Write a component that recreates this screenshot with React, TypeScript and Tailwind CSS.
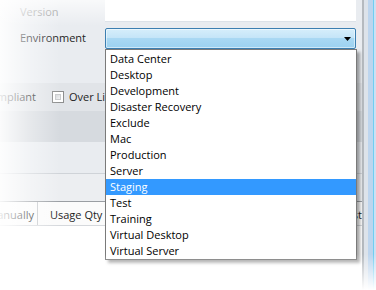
import React from "react";

const items = [
  "Data Center",
  "Desktop",
  "Development",
  "Disaster Recovery",
  "Exclude",
  "Mac",
  "Production",
  "Server",
  "Staging",
  "Test",
  "Training",
  "Virtual Desktop",
  "Virtual Server",
];

export default function App() {
  return (
    <div
      className="relative w-[376px] h-[290px] overflow-hidden bg-white flex text-[11px] text-[#1e1e1e]"
      style={{ fontFamily: '"Open Sans", "Noto Sans", sans-serif' }}
    >
      {/* main panel */}
      <div className="w-[362px] h-full flex flex-col bg-[#e9ecf0]">
        {/* Version row */}
        <div className="h-[22px] flex items-center">
          <div className="w-[105px] pl-[20px] text-[#858585] mt-[2px]">Version</div>
          <div className="flex-1 mr-[6px] h-full bg-white border-b border-[#dde2e8]" />
        </div>
        <div className="h-[6px]" />
        {/* Environment row */}
        <div className="h-[21px] flex items-center">
          <div className="w-[105px] pl-[20px]">Environment</div>
          <div className="flex-1 mr-[6px] h-full rounded-[2px] border border-[#3c7fb1] bg-[linear-gradient(#d6eefb_0%,#c5e5f8_45%,#a9d8f3_50%,#9bd1f0_100%)] flex items-center justify-end pr-[4px] shadow-[inset_0_0_0_1px_rgba(255,255,255,0.5)]">
            <svg width="7" height="4" viewBox="0 0 7 4">
              <path d="M0 0h7L3.5 4z" fill="#000" />
            </svg>
          </div>
        </div>
        <div className="h-[34px]" />
        {/* checkbox band */}
        <div className="h-[28px] bg-[#e1e4e8] flex items-center">
          <div className="w-[38px] overflow-hidden flex justify-end shrink-0">
            <span className="whitespace-nowrap pr-[2px]">Compliant</span>
          </div>
          <div className="w-[14px] shrink-0" />
          <div className="w-[12px] h-[12px] border border-[#8e8f8f] bg-white p-[2px] shrink-0">
            <div className="w-full h-full bg-[linear-gradient(135deg,#d6d8da,#f4f5f6)] border border-[#c9cbcd]" />
          </div>
          <span className="ml-[5px] whitespace-nowrap">Over Limit</span>
        </div>
        <div className="h-[31px] bg-[#d6dadf]" />
        <div className="h-[32px] border-b border-[#cfd3d8]" />
        <div className="h-[28px] bg-[#eceef1] border-b border-[#9a9ea3]" />
        {/* grid header */}
        <div className="h-[24px] bg-[#fbfbfb] flex items-stretch border-b border-[#d5d8dc]">
          <div className="w-[38px] overflow-hidden flex items-center justify-end shrink-0 border-r border-[#c4c7cb] pt-[4px]">
            <span className="whitespace-nowrap pr-[3px]">Manually</span>
          </div>
          <div className="flex-1 flex items-center pl-[12px] border-r border-[#c4c7cb] pt-[4px]">
            <span className="whitespace-nowrap">Usage Qty</span>
          </div>
          <div className="w-[5px] overflow-hidden flex items-center justify-end shrink-0 pt-[4px]">
            <span className="whitespace-nowrap">Cost</span>
          </div>
        </div>
        <div className="flex-1 bg-white" />
      </div>
      {/* right window chrome */}
      <div className="w-[2px] h-full bg-[#b5babf]" />
      <div className="w-[4px] h-full bg-[#dde3ea]" />
      <div className="flex-1 h-full bg-[#bdd5ee] flex">
        <div className="w-[5px]" />
        <div className="w-[1px] bg-[#6fcff2]" />
        <div className="flex-1 bg-[#cde0f3]" />
      </div>

      {/* dropdown list */}
      <div className="absolute left-[105px] top-[49px] w-[252px] border border-[#7a7a7a] bg-white pt-px shadow-[3px_3px_3px_rgba(0,0,0,0.35)] text-black">
        {items.map((it) => (
          <div
            key={it}
            className={
              "h-[16px] leading-[16px] pl-[4px] whitespace-nowrap " +
              (it === "Staging" ? "bg-[#3399ff] text-white" : "")
            }
          >
            {it}
          </div>
        ))}
      </div>

      {/* fades */}
      <div className="absolute left-0 top-0 bottom-0 w-[60px] bg-gradient-to-r from-white/90 via-white/40 to-transparent pointer-events-none" />
      <div className="absolute left-0 top-0 w-[105px] h-[26px] bg-gradient-to-b from-white/70 to-transparent pointer-events-none" />
      <div className="absolute left-0 right-0 bottom-0 h-[36px] bg-gradient-to-t from-white to-transparent pointer-events-none" />
    </div>
  );
}
